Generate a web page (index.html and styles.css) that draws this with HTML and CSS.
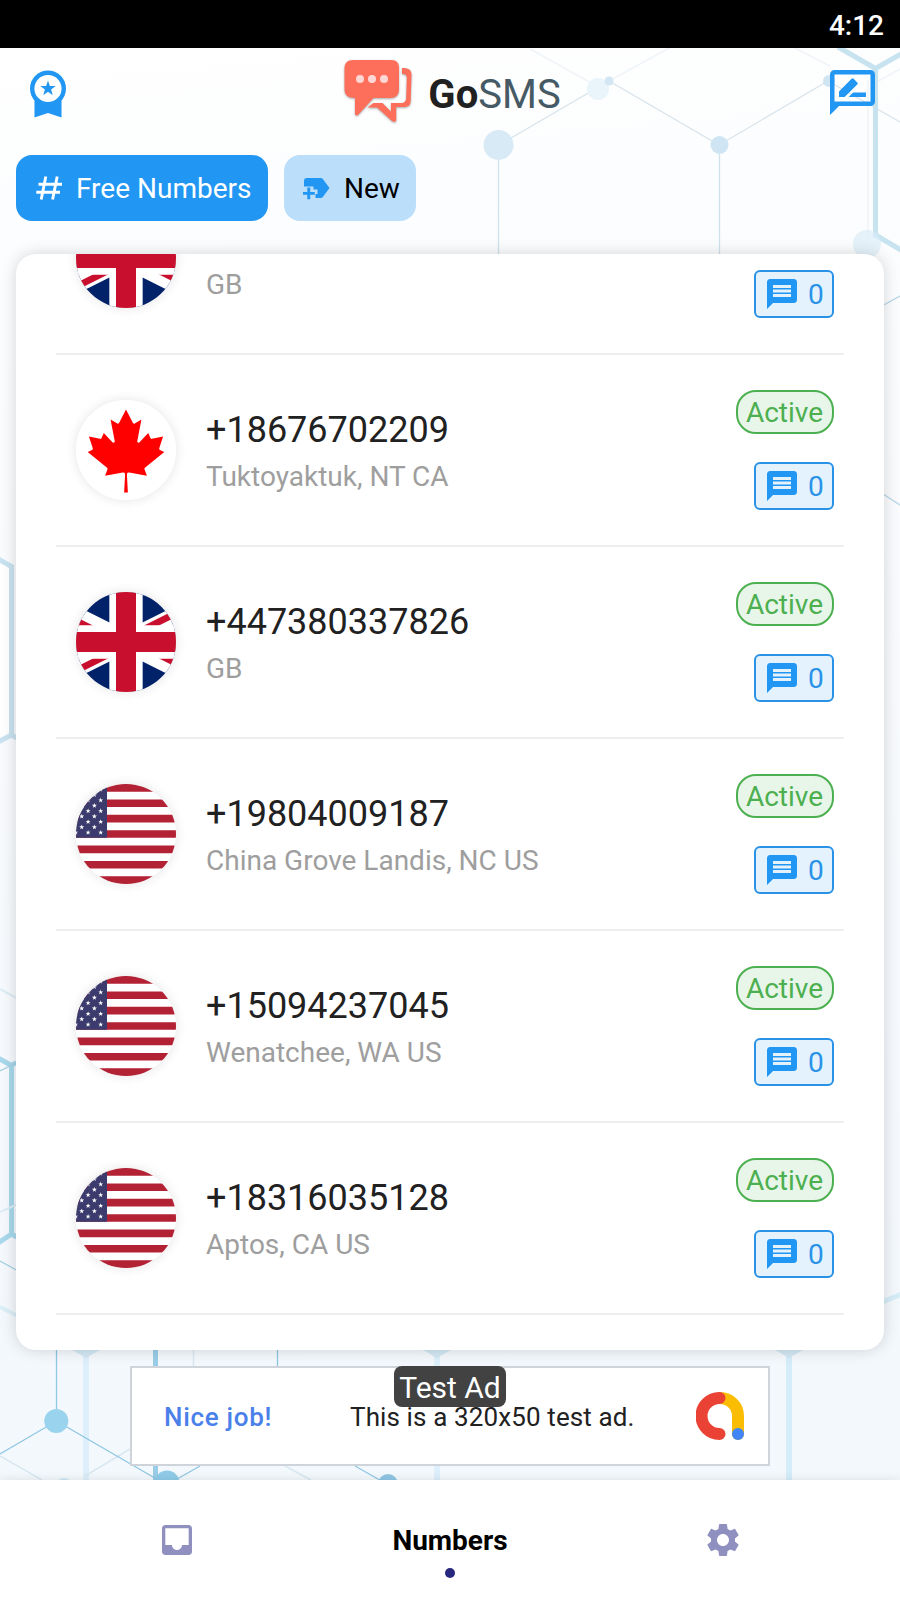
FILE: index.html
```html
<!DOCTYPE html>
<html lang="en">
<head>
<meta charset="utf-8">
<title>GoSMS</title>
<link rel="stylesheet" href="styles.css">
</head>
<body>
<svg class="defs" width="0" height="0" aria-hidden="true">
  <symbol id="message" viewBox="0 0 24 24"><path d="M20 2H4c-1.1 0-1.99.9-1.99 2L2 22l4-4h14c1.1 0 2-.9 2-2V4c0-1.1-.9-2-2-2zm-2 12H6v-2h12v2zm0-3H6V9h12v2zm0-3H6V6h12v2z"/></symbol>
  <symbol id="gb" viewBox="15 0 30 30">
    <clipPath id="gb-diag"><path d="M30 15h30v15zv15H0zH0V0zV0h30z"/></clipPath>
    <path fill="#012169" d="M0 0h60v30H0z"/>
    <path stroke="#fff" stroke-width="6" d="M0 0l60 30M60 0L0 30"/>
    <path stroke="#c8102e" stroke-width="4" clip-path="url(#gb-diag)" d="M0 0l60 30M60 0L0 30"/>
    <path stroke="#fff" stroke-width="10" d="M30 0v30M0 15h60"/>
    <path stroke="#c8102e" stroke-width="6" d="M30 0v30M0 15h60"/>
  </symbol>
  <symbol id="us" viewBox="0 0 100 100">
    <path fill="#fff" d="M0 0h100v100H0z"/>
    <path stroke="#b22234" stroke-width="7.69" d="M0 3.85h100M0 19.23h100M0 34.62h100M0 50h100M0 65.38h100M0 80.77h100M0 96.15h100"/>
    <path fill="#3c3b6e" d="M0 0h31v53.85H0z"/>
    <g fill="#fff">
      <path id="star" d="M24.700 13.600l.6 1.800h1.900l-1.500 1.150.55 1.850-1.550-1.100-1.550 1.100.55-1.850-1.500-1.150h1.900z"/>
      <use href="#star" y="-10.77"/><use href="#star" y="10.77"/><use href="#star" y="21.54"/><use href="#star" y="32.3"/>
      <use href="#star" x="-6.3" y="-5.38"/><use href="#star" x="-6.3" y="5.38"/><use href="#star" x="-6.3" y="16.15"/><use href="#star" x="-6.3" y="26.9"/>
      <use href="#star" x="-12.6"/><use href="#star" x="-12.6" y="10.77"/><use href="#star" x="-12.6" y="21.54"/><use href="#star" x="-12.6" y="32.3"/>
      <use href="#star" x="-19" y="5.38"/><use href="#star" x="-19" y="16.15"/><use href="#star" x="-19" y="26.9"/>
      <use href="#star" x="-25" y="32.3"/>
    </g>
  </symbol>
  <symbol id="ca" viewBox="0 0 100 100">
    <path fill="#fff" d="M0 0h100v100H0z"/>
    <path fill="red" transform="translate(50 50.6) scale(.0206)" d="m-90 2030 45-863a95 95 0 0 0-111-98l-859 151 116-320a65 65 0 0 0-20-73l-941-762 212-99a65 65 0 0 0 34-79l-186-572 542 115a65 65 0 0 0 73-38l105-247 423 454a65 65 0 0 0 111-57l-204-1052 327 189a65 65 0 0 0 91-27l332-652 332 652a65 65 0 0 0 91 27l327-189-204 1052a65 65 0 0 0 111 57l423-454 105 247a65 65 0 0 0 73 38l542-115-186 572a65 65 0 0 0 34 79l212 99-941 762a65 65 0 0 0-20 73l116 320-859-151a95 95 0 0 0-111 98l45 863z"/>
  </symbol>
</svg>

<svg class="backdrop" viewBox="0 0 900 1600" fill="none" aria-hidden="true">
  <!-- top right lattice -->
  <path stroke="#eff4f8" stroke-width="1.5" d="M530 49l65 36M609 81l62-34M795 48l35 18M868 80v155M875 83l25-14"/>
  <path stroke="#d9e4eb" stroke-width="1.2" d="M499 145l110-64 110 64 109-64 72 41"/>
  <path stroke="#cfe2ec" stroke-width="1.3" d="M498.500 145v110M719.500 145v110"/>
  <circle cx="598" cy="89" r="11" fill="#e9f4fb"/>
  <circle cx="609" cy="81" r="4.500" fill="#d3e6f3"/>
  <circle cx="498.500" cy="145" r="15" fill="#d8eaf6"/>
  <circle cx="719.500" cy="145" r="9" fill="#d0e5f4"/>
  <circle cx="829" cy="81" r="6" fill="#cfe5f3"/>
  <path stroke="#c8e3f0" stroke-width="5" d="M838 47l37.500 21.500V235L901 250M875.500 68.500L901 54"/>
  <circle cx="867" cy="244" r="14" fill="#d9edf8" opacity=".65"/>
  <path stroke="#b5d5e6" stroke-width="1.3" d="M880 307l20-11M880 492l20 13"/>
  <path stroke="#d6edf7" stroke-width="5" d="M880 1303l22-9"/>
  <!-- left edge -->
  <path fill="#fff" d="M0 562l10 5v166l-10 4z"/>
  <path stroke="#c9e2ef" stroke-width="5" d="M-2 559l13.500 7.500V735L-2 742M11 735l8 4"/>
  <path stroke="#a8d8ec" stroke-width="5" d="M-2 1058l13.500 7.500V1234L-2 1243M11 1065l8-3M11 1234l8 4"/>
  <path stroke="#dcecf4" stroke-width="2" d="M0 989l20 11M0 1212l20-9"/>
  <path stroke="#a5cfe3" stroke-width="1.300" d="M0 1071l20-10M0 1261l20 11"/>
  <path stroke="#daeef7" stroke-width="4" d="M0 1307l20 10"/>
  <!-- bottom -->
  <path stroke="#dceffa" stroke-width="6" d="M86 1350v132M437 1350v132"/>
  <path stroke="#d5edfb" stroke-width="6" d="M789 1350v132"/>
  <path fill="#d3e8f4" d="M72 1350h28l-14 8zM423 1350h28l-14 8zM775 1350h28l-14 8z"/>
  <path stroke="#d9e8f0" stroke-width="1.500" d="M0 1456l42 24M130 1449l-45 27M285 1466l26 14M193.500 1350v20"/>
  <path stroke="#9acde8" stroke-width="5" d="M155.500 1350v132"/>
  <path stroke="#8fc6e2" stroke-width="1.300" d="M56.500 1345v76L0 1454M56.500 1421l100 58M170 1483l30-17M355 1466l30 17M277.500 1350v20"/>
  <circle cx="56.300" cy="1421" r="12" fill="#9ad3ee"/>
  <circle cx="167" cy="1483" r="12.500" fill="#8fcbe8"/>
  <circle cx="388" cy="1484" r="10" fill="#8fc6e5"/>
  <circle cx="64" cy="1486" r="8" fill="#cfe8f4"/>
</svg>

<div class="status">4:12</div>

<header class="header">
  <svg class="badge-icon" viewBox="0 0 36 48" fill="#2196f3">
    <path d="M4.500 27h27v20.500L18 43 4.500 47.500z"/><circle cx="18" cy="18.500" r="18"/><circle cx="18" cy="18.500" r="13.600" fill="#fff"/>
    <path d="M18 10.500l1.900 5.500h5.900l-4.700 3.500 1.700 5.700-4.800-3.400-4.800 3.400 1.700-5.700-4.700-3.500h5.900z"/>
  </svg>
  <div class="brand">
    <svg class="logo" viewBox="344 59 70 66">
      <g fill="#fe6f5b">
        <path d="M402 68c6 0 9.500 1 9.500 7l-.8 25c0 5-2 7-7 7h-7.500v13c0 2-2.500 2.500-4.500.8L377 107.500h-9.500l6-4.500h9l8.500 8.500V103h10c3.500 0 5-1.500 5.200-5l.6-20c0-3-1-4-4.800-4z"/>
        <path d="M353 60h38c6 0 8 3 8 8v21c0 6-3 9-9 9h-16.500l-15 16.500c-1.500 1.500-3.500 1-3.500-1V98c-7 0-10.500-3-10.500-9V69c0-6 3-9 8.500-9z"/>
      </g>
      <g fill="#ffd8d6"><circle cx="360" cy="79" r="4"/><circle cx="372" cy="79" r="4"/><circle cx="384" cy="79" r="4"/></g>
    </svg>
    <div class="wordmark"><b>Go</b>SMS</div>
  </div>
  <svg class="review-icon" viewBox="2 2 20 20" fill="#2196f3"><path d="M20 2H4c-1.100 0-2 .9-2 2v18l4-4h14c1.100 0 2-.9 2-2V4c0-1.100-.9-2-2-2zm0 14H4V4h16z"/><path d="M6 14v-2.500l5.600-5.600c.3-.3.600-.3.900 0l1.600 1.600c.3.300.3.600 0 .9L8.500 14zM10.300 14l2-1.950H18V14z"/></svg>
</header>

<div class="tabs">
  <div class="tab tab-on">
    <svg class="tab-icon" viewBox="36 175 27 26" fill="none" stroke="#fff" stroke-width="2.900"><path d="M38.500 184.300H62M36.300 192.300H60M45.800 176.500l-4.600 23M57.200 176.500l-4.600 23"/></svg>
    <span>Free Numbers</span>
  </div>
  <div class="tab tab-new">
    <svg class="tab-icon" viewBox="303 175 27 26" fill="#2196f3"><path d="M304 186.500V181q0-3 3-3h13.500q1.500 0 2.500 1.300l6.500 8.700-6.500 8.700q-1 1.300-2.500 1.300h-5v-4h2v-4.500h-4v-3z"/><path d="M303 191.900h4.300v-4.400h2.900v4.400h4.600v2.900h-4.600v4.400h-2.900v-4.400H303z"/></svg>
    <span>New</span>
  </div>
</div>

<main class="card">
  <div class="row row-cut">
    <svg class="flag"><use href="#gb"/></svg>
    <div class="info"><div class="number"></div><div class="place">GB</div></div>
    <div class="side"><div class="count"><svg><use href="#message"/></svg>0</div></div>
  </div>
  <div class="row">
    <svg class="flag"><use href="#ca"/></svg>
    <div class="info"><div class="number">+18676702209</div><div class="place">Tuktoyaktuk, NT CA</div></div>
    <div class="side"><div class="active">Active</div><div class="count"><svg><use href="#message"/></svg>0</div></div>
  </div>
  <div class="row">
    <svg class="flag"><use href="#gb"/></svg>
    <div class="info"><div class="number">+447380337826</div><div class="place">GB</div></div>
    <div class="side"><div class="active">Active</div><div class="count"><svg><use href="#message"/></svg>0</div></div>
  </div>
  <div class="row">
    <svg class="flag"><use href="#us"/></svg>
    <div class="info"><div class="number">+19804009187</div><div class="place">China Grove Landis, NC US</div></div>
    <div class="side"><div class="active">Active</div><div class="count"><svg><use href="#message"/></svg>0</div></div>
  </div>
  <div class="row">
    <svg class="flag"><use href="#us"/></svg>
    <div class="info"><div class="number">+15094237045</div><div class="place">Wenatchee, WA US</div></div>
    <div class="side"><div class="active">Active</div><div class="count"><svg><use href="#message"/></svg>0</div></div>
  </div>
  <div class="row">
    <svg class="flag"><use href="#us"/></svg>
    <div class="info"><div class="number">+18316035128</div><div class="place">Aptos, CA US</div></div>
    <div class="side"><div class="active">Active</div><div class="count"><svg><use href="#message"/></svg>0</div></div>
  </div>
</main>

<aside class="ad">
  <span class="ad-nice">Nice job!</span>
  <span class="ad-text">This is a 320x50 test ad.</span>
  <svg class="ad-logo" viewBox="0 0 48 48" fill="none" stroke-width="12" stroke-linecap="round"><path stroke="#fbbc04" d="M24 6a18 18 0 0 1 18 18v18"/><path stroke="#ea4335" d="M23.500 6a18 18 0 0 0 0 36"/><circle cx="42" cy="42" r="6" fill="#4285f4"/></svg>
  <span class="ad-tag">Test Ad</span>
</aside>

<nav class="nav">
  <svg class="nav-icon" viewBox="0 0 24 24"><path d="M19 3H4.990c-1.110 0-1.980.89-1.980 2L3 19c0 1.100.88 2 1.990 2H19c1.100 0 2-.9 2-2V5c0-1.110-.9-2-2-2zm0 12h-4c0 1.660-1.350 3-3 3s-3-1.340-3-3H4.990V5H19v10z"/></svg>
  <div class="nav-on">Numbers<i class="dot"></i></div>
  <svg class="nav-icon" viewBox="0 0 24 24"><path d="M19.140 12.940c.04-.3.060-.61.060-.94 0-.32-.02-.64-.07-.94l2.030-1.580c.18-.14.23-.41.12-.61l-1.920-3.320c-.12-.22-.37-.29-.59-.22l-2.390.96c-.5-.38-1.030-.7-1.620-.94l-.36-2.540c-.04-.24-.24-.41-.48-.41h-3.840c-.24 0-.43.17-.47.41l-.36 2.540c-.59.24-1.130.57-1.620.94l-2.390-.96c-.22-.08-.47 0-.59.22L2.740 8.870c-.12.21-.08.47.12.61l2.030 1.580c-.05.3-.09.63-.09.94s.02.64.07.94l-2.030 1.580c-.18.14-.23.41-.12.61l1.920 3.320c.12.22.37.29.59.22l2.390-.96c.5.38 1.030.7 1.620.94l.36 2.540c.05.24.24.41.48.41h3.840c.24 0 .44-.17.47-.41l.36-2.540c.59-.24 1.130-.56 1.620-.94l2.390.96c.22.08.47 0 .59-.22l1.920-3.320c.12-.22.07-.47-.12-.61l-2.010-1.580zM12 15.600c-1.980 0-3.600-1.620-3.600-3.600s1.620-3.600 3.600-3.600 3.600 1.620 3.600 3.600-1.620 3.600-3.600 3.600z"/></svg>
</nav>
</body>
</html>
```
FILE: styles.css
```css
* { box-sizing: border-box; }
body {
  margin: 0;
  width: 900px;
  height: 1600px;
  overflow: hidden;
  position: relative;
  display: flex;
  flex-direction: column;
  font-family: Roboto, sans-serif;
  font-size: 28px;
  color: #212121;
  background: linear-gradient(175deg, #fff 0%, #fcfdfe 15%, #f8fafd 45%, #f3f8fd 90%);
}
svg { display: block; flex: none; }
.defs { position: absolute; }
.backdrop { position: absolute; left: 0; top: 0; width: 900px; height: 1600px; z-index: -1; }
.status {
  height: 48px;
  flex: none;
  padding-right: 16px;
  background: #000;
  color: #fff;
  font-size: 28px;
  font-weight: 500;
  line-height: 52px;
  text-align: right;
}
.header {
  height: 107px;
  flex: none;
  display: flex;
  justify-content: space-between;
  align-items: flex-start;
  padding: 22px 25px 0 30px;
}
.badge-icon { width: 36px; height: 48px; }
.review-icon { width: 45px; height: 45px; }
.brand { display: flex; margin: -11px 0 0 9px; gap: 14px; }
.logo { width: 70px; height: 66px; filter: drop-shadow(0 1px 1px #0005); }
.wordmark { font-size: 40px; line-height: 47px; padding-top: 12px; color: #455a64; }
.wordmark b { color: #212121; }
.tabs { height: 99px; flex: none; display: flex; gap: 16px; padding: 0 16px; align-items: flex-start; }
.tab { height: 66px; display: flex; align-items: center; border-radius: 16px; padding-left: 20px; gap: 13px; white-space: nowrap; }
.tab-icon { width: 27px; height: 26px; }
.tab-on { width: 252px; background: #2196f3; color: #fff; }
.tab-new { width: 132px; padding-left: 19px; gap: 14px; background: #bbdefb; color: #000; }
.card {
  height: 1096px;
  flex: none;
  margin: 0 16px;
  padding: 0 40px;
  overflow: hidden;
  background: #fff;
  border-radius: 20px;
  box-shadow: 0 0 16px rgba(0, 0, 0, .16);
}
.row { height: 192px; display: flex; border-bottom: 2px solid #eee; padding: 0 10px 0 20px; }
.row-cut { margin-top: -91px; }
.flag { width: 100px; height: 100px; margin-top: 45px; border-radius: 50%; box-shadow: 0 0 12px rgba(0, 0, 0, .11); }
.info { flex: 1; padding: 54px 0 0 30px; }
.number { height: 42px; font-size: 36px; line-height: 42px; }
.place { margin-top: 9px; line-height: 33px; color: #9e9e9e; }
.side { display: flex; flex-direction: column; align-items: flex-end; justify-content: flex-end; gap: 28px; padding-bottom: 35px; }
.active {
  width: 98px;
  height: 44px;
  padding-right: 1px;
  border: 2px solid #4caf50;
  border-radius: 20px;
  background: #e8f5e9;
  color: #4caf50;
  line-height: 41px;
  text-align: center;
}
.count {
  width: 80px;
  height: 48px;
  display: flex;
  align-items: center;
  gap: 8px;
  padding: 0 0 0 8px;
  border: 2px solid #2a93e8;
  border-radius: 6px;
  background: #e3f2fd;
  color: #2a93e8;
}
.count svg { width: 36px; height: 36px; fill: #2196f3; }
.ad {
  position: relative;
  flex: none;
  width: 640px;
  height: 100px;
  margin: 16px 0 14px 130px;
  border: 2px solid #ced4da;
  background: #fff;
  display: flex;
  align-items: center;
  padding: 0 24px 0 32px;
}
.ad-nice { width: 186px; padding-top: 2px; color: #4a80ea; font-size: 26px; font-weight: 500; letter-spacing: .7px; }
.ad-text { flex: 1; padding-top: 2px; font-size: 26px; letter-spacing: .12px; white-space: nowrap; }
.ad-logo { width: 48px; height: 48px; }
.ad-tag {
  position: absolute;
  left: 262px;
  top: -2px;
  width: 112px;
  height: 41px;
  border-radius: 8px;
  background: #424242;
  color: #fff;
  font-size: 30px;
  line-height: 43px;
  text-align: center;
}
.nav {
  flex: 1;
  display: flex;
  justify-content: space-between;
  align-items: center;
  padding: 0 157px;
  background: #fff;
  box-shadow: 0 0 10px rgba(0, 0, 0, .1);
}
.nav-icon { width: 40px; height: 40px; fill: #9090c0; }
.nav-on { display: flex; flex-direction: column; align-items: center; gap: 11px; padding-top: 22px; font-weight: 700; line-height: 33px; color: #000; }
.dot { width: 10px; height: 10px; border-radius: 50%; background: #27277f; }
```
